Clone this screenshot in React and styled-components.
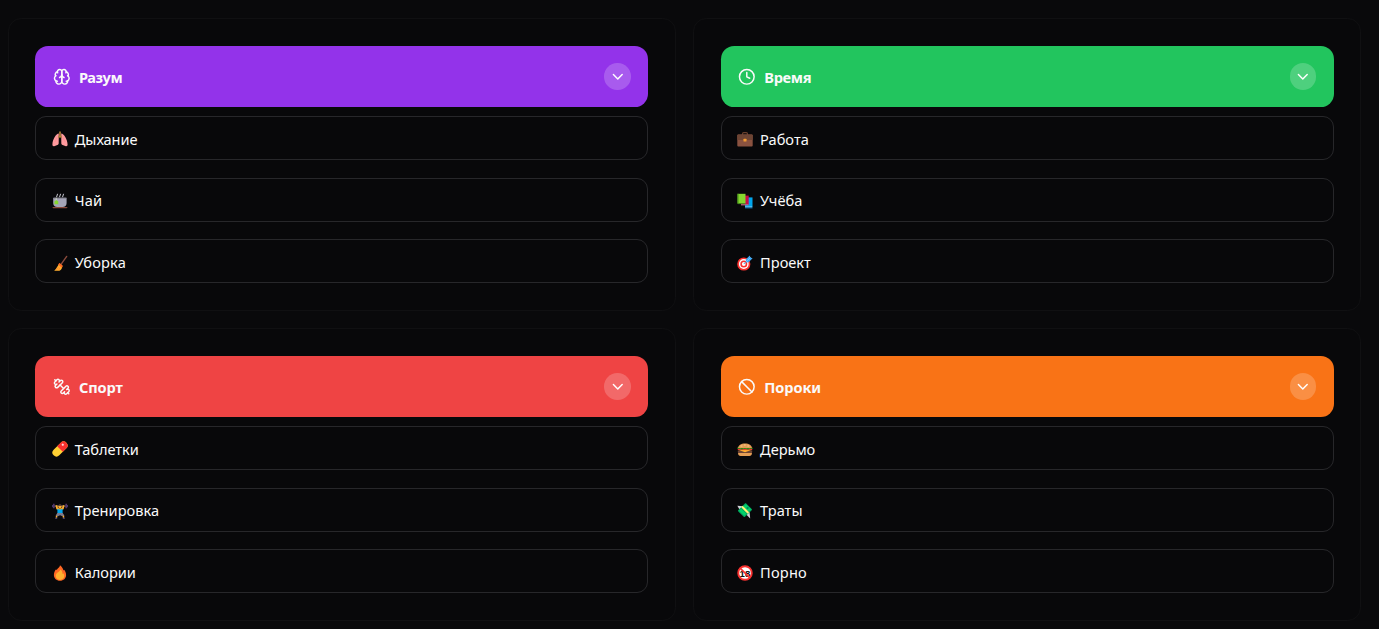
import React from "react";
import styled, { createGlobalStyle } from "styled-components";
import { Ban, ChevronDown } from "lucide-react";

const GlobalStyle = createGlobalStyle`
  *, *::before, *::after { box-sizing: border-box; }
  body {
    margin: 0;
    overflow: hidden;
    background: #09090b;
    color: #fafafa;
    font-family: "Noto Sans", "Open Sans", sans-serif;
  }
`;

const Board = styled.main`
  display: grid;
  grid-template-columns: 1fr 1fr;
  gap: 17.2px 17.6px;
  padding: 18px 18px 8px 8px;
`;

const Panel = styled.section`
  height: 292.8px;
  padding: 26.6px 26.4px;
  border: 1px solid #101012;
  border-radius: 13.2px;
  background: #08080a;
`;

const PanelHeader = styled.header`
  display: flex;
  align-items: center;
  height: 61.4px;
  padding: 1px 17.4px 0 17.6px;
  border-radius: 13.2px;
  background: ${(p) => p.$color};
`;

const Title = styled.h2`
  flex: 1;
  margin: 1px 0 0 8.4px;
  font-size: 14.6px;
  line-height: 24px;
  font-weight: 700;
  letter-spacing: ${(p) => p.$tracking}px;
`;

const Toggle = styled.button`
  display: grid;
  place-items: center;
  width: 26.6px;
  height: 26.6px;
  padding: 0;
  border: 0;
  border-radius: 50%;
  color: #fff;
  background: rgba(255, 255, 255, 0.2);
`;

const Items = styled.ul`
  display: flex;
  flex-direction: column;
  gap: 17.6px;
  margin: 9px 0 0;
  padding: 0;
  list-style: none;
`;

const Item = styled.li`
  display: flex;
  align-items: center;
  height: 44px;
  padding: 1.3px 15.6px 0;
  border: 1px solid #27272a;
  border-radius: 11px;
`;

const Emoji = styled.svg`
  flex: none;
  width: 16px;
  height: 16px;
  margin: 1.4px 6.8px 0 0;
`;

const Label = styled.span`
  font-size: 14.6px;
  line-height: 24px;
  letter-spacing: ${(p) => p.$tracking}px;
`;

const LineIcon = ({ children }) => (
  <svg width="17.6" height="17.6" viewBox="0 0 24 24" fill="none" stroke="currentColor" strokeWidth="2" strokeLinecap="round" strokeLinejoin="round">
    {children}
  </svg>
);

const BrainIcon = () => (
  <LineIcon>
    <path d="M12 5a3 3 0 1 0-5.997.125 4 4 0 0 0-2.526 5.77 4 4 0 0 0 .556 6.588A4 4 0 1 0 12 18Z" />
    <path d="M12 5a3 3 0 1 1 5.997.125 4 4 0 0 1 2.526 5.77 4 4 0 0 1-.556 6.588A4 4 0 1 1 12 18Z" />
    <path d="M15 13a4.5 4.5 0 0 1-3-4 4.5 4.5 0 0 1-3 4" />
    <path d="M17.599 6.5a3 3 0 0 0 .399-1.375M6.003 5.125A3 3 0 0 0 6.401 6.5M3.477 10.896a4 4 0 0 1 .585-.396M19.938 10.5a4 4 0 0 1 .585.396M6 18a4 4 0 0 1-1.967-.516M19.967 17.484A4 4 0 0 1 18 18" />
  </LineIcon>
);

const ClockIcon = () => (
  <LineIcon>
    <circle cx="12" cy="12" r="10" />
    <path d="M12 6v6l4 2" />
  </LineIcon>
);

const DumbbellIcon = () => (
  <LineIcon>
    <path d="M14.4 14.4 9.6 9.6" />
    <path d="M18.657 21.485a2 2 0 1 1-2.829-2.828l-1.767 1.768a2 2 0 1 1-2.829-2.829l6.364-6.364a2 2 0 1 1 2.829 2.829l-1.768 1.767a2 2 0 1 1 2.828 2.829z" />
    <path d="m21.5 21.5-1.4-1.4M3.9 3.9 2.5 2.5" />
    <path d="M6.404 12.768a2 2 0 1 1-2.829-2.829l1.768-1.767a2 2 0 1 1-2.828-2.829l2.828-2.828a2 2 0 1 1 2.829 2.828l1.767-1.768a2 2 0 1 1 2.829 2.829z" />
  </LineIcon>
);

const BanIcon = () => <Ban size={17.6} />;

const emojis = {
  lungs: (
    <>
      <path d="M6.8 2.6C4.4 2.5 0.6 8.2.4 13.6c0 1.7 1 2 2.4 1.4l2.6-1.1c.9-.4 1.3-1 1.3-2zM9.2 2.6c2.4-.1 6.2 5.6 6.4 11 0 1.7-1 2-2.4 1.4l-2.6-1.1c-.9-.4-1.3-1-1.3-2z" fill="#ff9a9e" />
      <path d="M5 6.5 3 11M11 6.5l2 4.5" stroke="#f98a92" strokeWidth=".7" />
      <path d="M8 .4v4.4L6.4 6.6M8 4.8l1.6 1.8" stroke="#b3803b" strokeWidth="1.7" fill="none" />
    </>
  ),
  tea: (
    <>
      <path d="M4.5 4.2 5.6.8M7.5 4.2 8.6.8M10.5 4.2 11.6.8" stroke="#c9c9d2" strokeWidth="1" />
      <path d="M1.2 4.7h13.4v5.3c0 2.5-1.6 4-4 4H5.2c-2.4 0-4-1.5-4-4z" fill="#a5a5b7" />
      <path d="M2 5.1h12" stroke="#73747f" strokeWidth=".8" />
      <path d="M4.2 4.8v4" stroke="#d8e9bb" strokeWidth=".7" />
      <path d="m4.3 7 2 1.5v2.7H2.5V8.5z" fill="#86d72f" />
      <path d="M.3 14h15.4l-1 1.3H1.2z" fill="#8b4b3c" />
    </>
  ),
  broom: (
    <>
      <path d="m9 9.4 5.7-8" stroke="#8b4b3c" strokeWidth="1.4" strokeLinecap="round" />
      <path d="m7.5 8.3 3 2.4c-.2 2-1.4 4.7-3 5H2.2l1.6-1.8z" fill="#ffb02e" />
      <path d="m7.5 8.1 3.2 2.7-.8 1.9-3.8-3.1z" fill="#ff6724" />
      <path d="m4.3 14.9 2.4-3M6.5 15.2l1.4-2.4" stroke="#ff822d" strokeWidth=".8" />
    </>
  ),
  briefcase: (
    <>
      <path d="M5.5 4V2.9c0-.8.5-1.2 1.2-1.2h2.6c.7 0 1.2.4 1.2 1.2V4" fill="none" stroke="#6b412d" strokeWidth="1.2" />
      <rect x=".3" y="3.5" width="15.4" height="11.9" rx="1" fill="#8a5240" />
      <path d="M.3 4.5q0-1 1-1h13.4q1 0 1 1V8c0 .7-.4 1-1 1H1.3c-.6 0-1-.3-1-1z" fill="#6d4534" />
      <rect x="6.5" y="7.7" width="3" height="2.8" rx=".5" fill="#f29b32" />
    </>
  ),
  books: (
    <>
      <path d="M8 4.4h7.5v9.6H8z" fill="#00a6ed" />
      <path d="M8 13.6h7.2v1H8z" fill="#b7d9ef" />
      <path d="M8 14.4h7.5v1H8z" fill="#0074ba" />
      <path d="M4 2.6h7.7v9.2H4z" fill="#ca0b4a" />
      <path d="M4 11.2h7.4v1.2H4z" fill="#b46b86" />
      <path d="M.5.8h8v9.7h-8z" fill="#86d72f" />
      <path d="M.5.8h1v10h-1z" fill="#44911b" />
      <path d="M1 10.2h7.5v.9H1z" fill="#44911b" />
    </>
  ),
  target: (
    <>
      <circle cx="6.8" cy="9" r="6.6" fill="#f8312f" />
      <circle cx="6.8" cy="9" r="4.9" fill="#fff" />
      <circle cx="6.8" cy="9" r="3.5" fill="#f8312f" />
      <circle cx="6.8" cy="9" r="1.9" fill="#fff" />
      <path d="m6.8 9 4.6-4.6" stroke="#46a4e3" strokeWidth="1" />
      <path d="M8.8 4.6 12.7.5l.7 2 2.2.7-4 4-2.5.2z" fill="#3fa9f5" />
      <path d="m9 7.1 4.4-4.6" stroke="#70caff" strokeWidth="1" />
    </>
  ),
  pill: (
    <g transform="rotate(-45 8 8)">
      <rect x="-1" y="4" width="18" height="8" rx="4" fill="#ffd033" />
      <path d="M8 4h5a4 4 0 0 1 0 8H8z" fill="#f8312f" />
      <circle cx="13" cy="6.9" r="1.1" fill="#ffd7dc" />
    </g>
  ),
  lifter: (
    <>
      <path d="M1 3.1h14" stroke="#998ea4" strokeWidth=".7" />
      <path d="M1.8.8v4.5M14.2.8v4.5" stroke="#533566" strokeWidth="1.7" />
      <path d="M.5 2v2.2M15.5 2v2.2" stroke="#433b6b" strokeWidth="1" />
      <path d="M4.3 2.2 5.2 5.6l2.8 1 2.8-1 .9-3.4" fill="none" stroke="#ffb02e" strokeWidth="1.9" strokeLinejoin="round" />
      <circle cx="8" cy="3.8" r="1.7" fill="#ffb02e" />
      <path d="M6.3 3c.2-2.5 3.2-2.5 3.4 0z" fill="#5d4235" />
      <path d="M5.4 5.7q2.6 1.5 5.2 0V11H5.4z" fill="#00a6ed" />
      <path d="M5.3 10.1h5.4l1.7 2.4-1.5 1-2.8-1.3-2.8 1.3-1.6-1z" fill="#7d7a8c" />
      <path d="M4.5 12.7v2M11.5 12.7v2" stroke="#ffb02e" strokeWidth="1.4" />
      <path d="M3.2 15.2h2M10.8 15.2h2" stroke="#635994" strokeWidth="1" />
    </>
  ),
  fire: (
    <>
      <path d="M8 .3C7.8 2.6 5.6 3.4 4.7 5c-.3-.2-.5-.4-.6-.8C2.6 6 1.9 7.8 1.9 9.9c0 3.4 2.6 5.8 6.1 5.8s6.1-2.4 6.1-5.8c0-2-.7-3.6-1.9-5.2-.1.3-.4.5-.7.6C10.8 3.300 9.700 1.500 8 .3z" fill="#ff6723" />
      <path d="M8.400 4.600c-.3 2.300-4.700 3-4.700 6.500 0 2.300 2 3.900 4.300 3.900s4.300-1.600 4.300-3.900c0-1.200-.4-2.100-1-2.900-.2.4-.5.6-.8.7.1-1.900-.8-3.400-2.100-4.300z" fill="#ffb02e" />
    </>
  ),
  burger: (
    <>
      <path d="M1.1 11.4h13.8v1.2c0 1.4-1 2.4-2.5 2.4H3.6c-1.5 0-2.5-1-2.5-2.4z" fill="#e39d55" />
      <path d="M.8 9.6h14.4v1.1c0 .9-.6 1.3-1.4 1.3H2.2C1.4 12 .8 11.6.8 10.7z" fill="#6d4534" />
      <path d="M1 8.7h14L8 11.2z" fill="#ffb02e" />
      <path d="M.8 8.5h14.4" stroke="#f8312f" strokeWidth="1.2" />
      <path d="M.5 7.5q1.4-1.2 2.9 0t3 0 3 0 3 0 3.1 0" fill="none" stroke="#44911b" strokeWidth="1.5" />
      <path d="M1.1 7C1.1 4.3 4 2.5 8 2.5S14.9 4.3 14.9 7z" fill="#e39d55" />
      <path d="M4 5h1M7.3 4h1M10.8 5h1" stroke="#ffe2ab" strokeWidth=".7" strokeLinecap="round" />
    </>
  ),
  money: (
    <>
      <path d="m.3 2.8 6.2.4-3.8 3.5z" fill="#d3d3da" />
      <path d="m9.2 11.6 3.3-3 .7 6.9z" fill="#d3d3da" />
      <path d="M9.2.5 14.7 6c.4.4.4.9 0 1.300L8 13.7c-.4.4-.9.4-1.3 0L1.3 8.4c-.4-.4-.4-.9 0-1.3L7.9.5c.4-.4.9-.4 1.3 0z" fill="#00a65f" />
      <path d="m8.8 1.2 5.2 5-2.6 2.5-5.2-5zM4.1 5.8l5.2 5-2 2-5.2-5z" fill="#00d26a" />
      <path d="m4.9 3.6 6.5 6.3" stroke="#fff478" strokeWidth="2.1" />
      <circle cx="10.6" cy="5" r="1.1" fill="#008463" />
    </>
  ),
  adult: (
    <>
      <circle cx="8" cy="8" r="6.8" fill="#fff" />
      <text x="7.9" y="11.6" textAnchor="middle" fontFamily="Liberation Sans, sans-serif" fontSize="9.6" fontWeight="700" fill="#111">18</text>
      <circle cx="8" cy="8" r="6.8" fill="none" stroke="#f8312f" strokeWidth="1.9" />
      <path d="m3.4 3.4 9.2 9.2" stroke="#f8312f" strokeWidth="1.6" />
    </>
  ),
};

const groups = [
  { title: "Разум", color: "#9333ea", tracking: -0.4, Icon: BrainIcon, items: [["lungs", "Дыхание", -0.05], ["tea", "Чай", 0.1], ["broom", "Уборка", 0.15]] },
  { title: "Время", color: "#22c55e", tracking: -0.3, Icon: ClockIcon, items: [["briefcase", "Работа"], ["books", "Учёба", 0.05], ["target", "Проект"]] },
  { title: "Спорт", color: "#ef4444", tracking: -0.15, Icon: DumbbellIcon, items: [["pill", "Таблетки", -0.05], ["lifter", "Тренировка", 0.05], ["fire", "Калории", -0.05]] },
  { title: "Пороки", color: "#f97316", tracking: -0.1, Icon: BanIcon, items: [["burger", "Дерьмо", -0.05], ["money", "Траты"], ["adult", "Порно", 0.2]] },
];

export default function App() {
  return (
    <>
      <GlobalStyle />
      <Board>
        {groups.map(({ title, color, Icon, items, tracking = 0 }) => (
          <Panel key={title}>
            <PanelHeader $color={color}>
              <Icon />
              <Title $tracking={tracking}>{title}</Title>
              <Toggle aria-label={title}>
                <ChevronDown size={17.6} strokeWidth={2} />
              </Toggle>
            </PanelHeader>
            <Items>
              {items.map(([emoji, label, spacing = 0]) => (
                <Item key={label}>
                  <Emoji viewBox="0 0 16 16" aria-hidden="true">{emojis[emoji]}</Emoji>
                  <Label $tracking={spacing}>{label}</Label>
                </Item>
              ))}
            </Items>
          </Panel>
        ))}
      </Board>
    </>
  );
}
